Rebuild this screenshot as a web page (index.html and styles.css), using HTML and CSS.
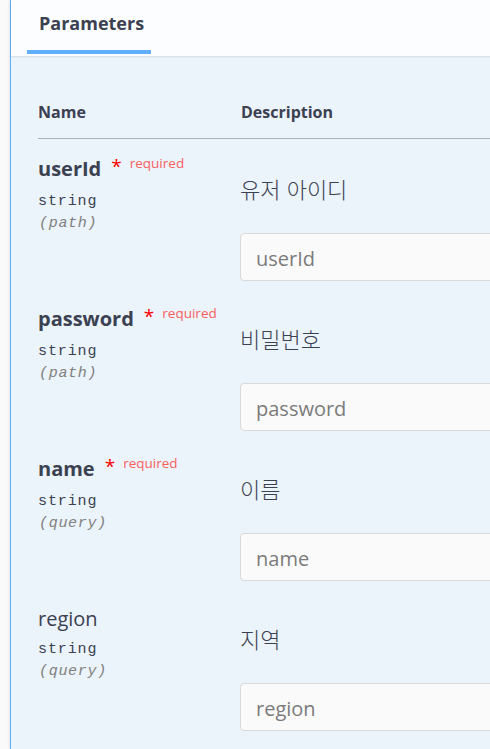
FILE: index.html
```html
<!DOCTYPE html>
<html lang="ko">
<head>
<meta charset="utf-8">
<title>Parameters</title>
<link rel="stylesheet" href="styles.css">
</head>
<body>
<div class="page">
  <div class="opblock">
    <div class="section-header">
      <div class="tab"><h4 class="tab-title">Parameters</h4></div>
    </div>
    <div class="params">
      <div class="params-head">
        <div class="col-name">Name</div>
        <div class="col-desc">Description</div>
      </div>

      <div class="param-row">
        <div class="col-name">
          <div class="pname required">userId<span class="star">*</span><span class="req">required</span></div>
          <div class="ptype">string</div>
          <div class="pin">(path)</div>
        </div>
        <div class="col-desc">
          <p class="pdesc">유저 아이디</p>
          <input class="pinput" type="text" placeholder="userId">
        </div>
      </div>

      <div class="param-row">
        <div class="col-name">
          <div class="pname required">password<span class="star">*</span><span class="req">required</span></div>
          <div class="ptype">string</div>
          <div class="pin">(path)</div>
        </div>
        <div class="col-desc">
          <p class="pdesc">비밀번호</p>
          <input class="pinput" type="text" placeholder="password">
        </div>
      </div>

      <div class="param-row">
        <div class="col-name">
          <div class="pname required">name<span class="star">*</span><span class="req">required</span></div>
          <div class="ptype">string</div>
          <div class="pin">(query)</div>
        </div>
        <div class="col-desc">
          <p class="pdesc">이름</p>
          <input class="pinput" type="text" placeholder="name">
        </div>
      </div>

      <div class="param-row">
        <div class="col-name">
          <div class="pname">region</div>
          <div class="ptype">string</div>
          <div class="pin">(query)</div>
        </div>
        <div class="col-desc">
          <p class="pdesc">지역</p>
          <input class="pinput" type="text" placeholder="region">
        </div>
      </div>
    </div>
  </div>
</div>
</body>
</html>
```

FILE: styles.css
```css
html, body {
  margin: 0;
  padding: 0;
  overflow: hidden;
  background: #fafafa;
}

.page {
  width: 700px;
  padding-left: 10px;
  height: 749px;
}

.opblock {
  border-left: 1px solid #61affe;
  background: #ebf3fb;
  height: 100%;
  box-shadow: 0 0 3px rgba(0, 0, 0, 0.15);
  font-family: "Open Sans", "Noto Sans CJK KR", sans-serif;
  color: #3b4151;
}

.section-header {
  background: #fbfdfe;
  height: 56px;
  box-shadow: 0 1px 2px rgba(0, 0, 0, 0.1);
  padding-left: 16px;
  box-sizing: border-box;
}

.tab {
  display: inline-block;
  padding: 13px 7px 0 12px;
  border-bottom: 4px solid #61affe;
}

.tab-title {
  margin: 0 0 17px 0;
  font-size: 18px;
  line-height: 20px;
  font-weight: 700;
  color: #3b4151;
}

.params {
  padding: 46px 0 0 27px;
}

.params-head {
  display: grid;
  grid-template-columns: 203px 1fr;
  font-size: 16px;
  line-height: 20px;
  font-weight: 700;
  padding-bottom: 16px;
  border-bottom: 1px solid #a9b0bd;
}

.param-row {
  display: grid;
  grid-template-columns: 202px 1fr;
  height: 150px;
  padding-top: 18px;
  box-sizing: border-box;
}

.pname {
  font-size: 20px;
  line-height: 24px;
  font-weight: 400;
  white-space: nowrap;
}

.pname.required {
  font-weight: 700;
}

.star {
  color: #ff0000;
  font-size: 19px;
  font-weight: 400;
  position: relative;
  top: -3px;
  margin-left: 10px;
}

.req {
  color: #f95f5f;
  font-size: 13.5px;
  font-weight: 400;
  position: relative;
  top: -8px;
  margin-left: 8px;
}

.ptype {
  font-family: "Liberation Mono", monospace;
  font-size: 15px;
  line-height: 22px;
  letter-spacing: 0.9px;
  margin-top: 8px;
  color: #3b4151;
}

.pin {
  font-family: "Liberation Mono", monospace;
  font-style: italic;
  font-size: 15px;
  line-height: 22px;
  letter-spacing: 0.7px;
  color: #808080;
  padding-left: 1px;
}

.col-desc {
  display: flex;
  flex-direction: column;
  align-items: flex-start;
}

.pdesc {
  margin: 16px 0 0 0;
  font-family: "Noto Sans CJK KR", sans-serif;
  font-size: 22px;
  font-weight: 300;
  line-height: 30px;
  color: #3b4151;
}

.pinput {
  margin-top: 30px;
  width: 340px;
  height: 48px;
  box-sizing: border-box;
  border: 1px solid #d9d9d9;
  border-radius: 4px;
  background: #fafafa;
  padding: 3px 14px 0 15px;
  font-family: "Open Sans", sans-serif;
  font-size: 20px;
  color: #3b4151;
  outline: none;
}

.pinput::placeholder {
  color: #7b7b7b;
  opacity: 1;
}
```
